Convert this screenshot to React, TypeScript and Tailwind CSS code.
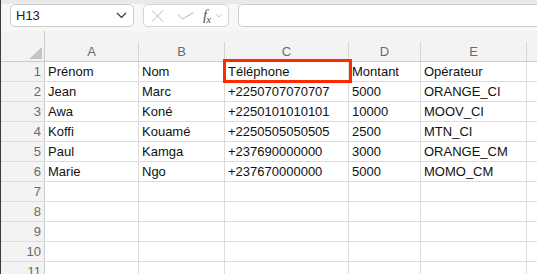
import React from "react";

type Row = [string, string, string, string, string];

const rows: Row[] = [
  ["Prénom", "Nom", "Téléphone", "Montant", "Opérateur"],
  ["Jean", "Marc", "+2250707070707", "5000", "ORANGE_CI"],
  ["Awa", "Koné", "+2250101010101", "10000", "MOOV_CI"],
  ["Koffi", "Kouamé", "+2250505050505", "2500", "MTN_CI"],
  ["Paul", "Kamga", "+237690000000", "3000", "ORANGE_CM"],
  ["Marie", "Ngo", "+237670000000", "5000", "MOMO_CM"],
];

const colWidths = ["w-[94px]", "w-[86px]", "w-[124px]", "w-[72px]", "w-[106px]"];
const letters = ["A", "B", "C", "D", "E"];

const Toolbar: React.FC = () => (
  <div className="h-[31px] bg-[#f7f7f7] relative">
    <div className="h-[4px] bg-[#e9e9e9]" />
    <div className="flex items-stretch h-[23px] pl-[9px]">
      {/* name box */}
      <div className="w-[124px] bg-white border border-[#cdcdcd] rounded-[5px] flex items-center justify-between pl-[5px] pr-[6px]">
        <span className="text-[13px] text-[#222]">H13</span>
        <svg width="11" height="7" viewBox="0 0 11 7">
          <path d="M1 1 L5.5 5.5 L10 1" fill="none" stroke="#333" strokeWidth="1.2" />
        </svg>
      </div>
      {/* cancel / enter / fx */}
      <div className="ml-[9px] w-[86px] bg-white border border-[#d3d3d3] rounded-[5px] flex items-center pl-[7px]">
        <svg width="13" height="12" viewBox="0 0 13 12">
          <path d="M1 0.5 L12 11.5 M12 0.5 L1 11.5" stroke="#b4b4b4" strokeWidth="1" fill="none" />
        </svg>
        <svg className="ml-[13px]" width="17" height="8" viewBox="0 0 17 8">
          <path d="M0.5 2 L5.5 7 L16.5 0.5" stroke="#b4b4b4" strokeWidth="1" fill="none" />
        </svg>
        <span className="ml-[9px] flex items-end text-[#555] italic font-['Liberation_Serif',serif] leading-none">
          <span className="text-[15px]">f</span>
          <span className="text-[11px] -ml-[1px] translate-y-[2px]">x</span>
        </span>
        <svg className="ml-[5px]" width="6" height="4" viewBox="0 0 6 4">
          <path d="M0.5 0.5 L3 3 L5.5 0.5" stroke="#bbb" strokeWidth="0.9" fill="none" />
        </svg>
      </div>
      {/* formula input */}
      <div className="ml-[9px] flex-1 bg-white border border-r-0 border-[#cdcdcd] rounded-l-[5px]" />
    </div>
  </div>
);

const HeaderBand: React.FC = () => (
  <div className="flex h-[31px] bg-[#f3f3f3] border-b border-[#cbcbcb]">
    <div className="w-[44px] shrink-0 border-r border-[#cbcbcb] flex items-end justify-end pr-[2px] pb-[2px]">
      <svg width="13" height="12" viewBox="0 0 13 12">
        <polygon points="13,0 13,12 0,12" fill="#c4c4c4" />
      </svg>
    </div>
    <div className="flex-1 flex flex-col">
      <div className="h-[11px]" />
      <div className="flex flex-1">
        {letters.map((l, i) => (
          <div
            key={l}
            className={`${colWidths[i]} shrink-0 border-r border-[#d6d6d6] flex items-center justify-center text-[13px] text-[#6a6a6a]`}
          >
            {l}
          </div>
        ))}
        <div className="flex-1" />
      </div>
    </div>
  </div>
);

const GridRow: React.FC<{ n: number; cells?: Row }> = ({ n, cells }) => (
  <div className="flex h-[20px] border-b border-[#dcdcdc]">
    <div className="w-[44px] shrink-0 bg-[#f3f3f3] border-r border-[#cbcbcb] flex items-center justify-end pr-[3px] text-[13px] text-[#6a6a6a]">
      {n}
    </div>
    {colWidths.map((w, i) => (
      <div
        key={i}
        className={`${w} shrink-0 border-r border-[#dcdcdc] flex items-center pl-[3px] pt-[1px] text-[13px] text-[#111] whitespace-nowrap overflow-hidden`}
      >
        {cells ? cells[i] : ""}
      </div>
    ))}
    <div className="flex-1" />
  </div>
);

export default function App() {
  return (
    <div className="w-[537px] h-[274px] overflow-hidden bg-white border-l border-[#3c3c3c] relative font-['Liberation_Sans',Arial,sans-serif]">
      <Toolbar />
      <HeaderBand />
      {Array.from({ length: 11 }, (_, i) => (
        <GridRow key={i} n={i + 1} cells={rows[i]} />
      ))}
      {/* red annotation box around C1 */}
      <div className="absolute left-[222px] top-[59px] w-[129px] h-[24px] border-[3px] border-[#ff2a00]" />
    </div>
  );
}
